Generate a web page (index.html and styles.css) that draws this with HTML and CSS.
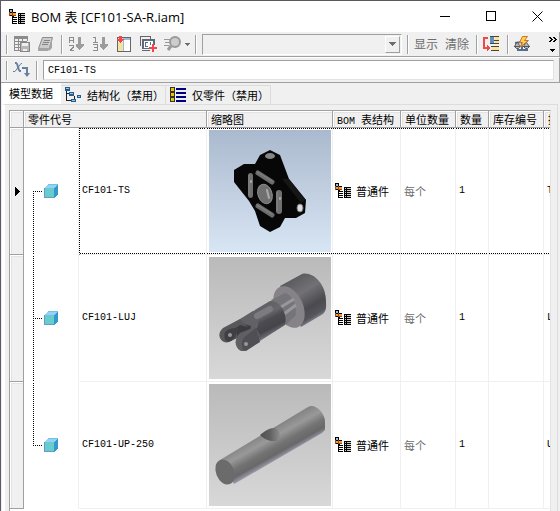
FILE: index.html
```html
<!DOCTYPE html>
<html lang="zh-CN">
<head>
<meta charset="UTF-8">
<meta name="viewport" content="width=device-width, initial-scale=1.0">
<title>BOM 表 [CF101-SA-R.iam]</title>
<link rel="stylesheet" href="styles.css">
</head>
<body>
  <!-- shared icons -->
  <svg class="defs" aria-hidden="true">
    <symbol id="icon-bom" viewBox="0 0 16 16">
      <path fill="#000" d="M0 0h4v3h3v4H5v1H4v7H3V7H0z"/>
      <path fill="#8cc8f0" d="M1 1h2v2H1z"/>
      <path fill="#f5a030" d="M1 4h2v2H1zM4 4h3v2H4z"/>
      <path fill="#a04810" d="M3 3h1v4H3zM0 3h1v4H0zM4 6h3v1H4z"/>
      <path fill="#000" d="M4 8h4v1H4zM4 10h4v1H4zM4 12h4v1H4zM4 14h4v1H4zM9 4h7v11H9z"/>
      <path fill="#ccc" d="M10 5h1v1h-1zM12 5h4v1h-4zM10 7h1v1h-1zM12 7h4v1h-4zM10 9h1v1h-1zM12 9h4v1h-4zM10 11h1v1h-1zM12 11h4v1h-4zM10 13h1v1h-1zM12 13h4v1h-4z"/>
    </symbol>
    <symbol id="icon-part" viewBox="0 0 14 14">
      <path fill="#66cccc" d="M0 4h10v10H0z"/>
      <path fill="#99ccff" d="M0 4l4-4h10l-4 4z"/>
      <path fill="#3399cc" d="M10 4l4-4v10l-4 4z"/>
      <path fill="none" stroke="#6699cc" d="M0.500 4v9.500h10"/>
      <path fill="none" stroke="#66cccc" d="M4 0.500h9.500"/>
    </symbol>
    <symbol id="icon-down" viewBox="0 0 7 4">
      <path d="M0 0h7v1H6v1H5v1H4v1H3V3H2V2H1V1H0z"/>
    </symbol>
    <linearGradient id="sky" x1="0" y1="0" x2="0" y2="1">
      <stop offset="0" stop-color="#abb9ce"/><stop offset="1" stop-color="#d8e5f4"/>
    </linearGradient>
    <linearGradient id="grey" x1="0" y1="0" x2="0" y2="1">
      <stop offset="0" stop-color="#bababa"/><stop offset="1" stop-color="#d8d8d8"/>
    </linearGradient>
  </svg>

  <header class="title-bar">
    <svg class="icon" width="16" height="16"><use href="#icon-bom"/></svg>
    <h1>BOM 表 [CF101-SA-R.iam]</h1>
    <div class="window-buttons">
      <button aria-label="最小化"><svg width="11" height="11"><path d="M0 5.500h10" stroke="#000"/></svg></button>
      <button aria-label="最大化"><svg width="11" height="11"><path d="M0.500 0.500h9v9h-9z" fill="none" stroke="#000"/></svg></button>
      <button aria-label="关闭"><svg class="smooth" width="11" height="11"><path d="M0.500 0.500l10 10M10.500 0.500l-10 10" stroke="#000"/></svg></button>
    </div>
  </header>

  <div class="toolbar">
    <span class="grip"></span>
    <button disabled aria-label="保存">
      <svg width="18" height="16">
        <path fill="#8c8c8c" d="M1 0h14v5h-1V3H2v11h6v1H1z"/>
        <path fill="#8c8c8c" d="M2 5h12v1H2zM2 8h6v1H2zM2 11h6v1H2zM5 3h1v11H5zM9 3h1v3H9z"/>
        <path fill="#b8b8b8" d="M8 6h8v10H8z"/>
        <path fill="none" stroke="#858585" d="M7.500 6.500h9v9h-9z"/>
        <path fill="#eee" d="M9 7h6v3H9zM10 13h4v2h-4z"/>
      </svg>
    </button>
    <button disabled aria-label="导出">
      <svg class="smooth" width="16" height="16">
        <path fill="#ccc" stroke="#8c8c8c" d="M5.500 1.500h10l-3 11H1.500z"/>
        <path fill="#a4a4a4" d="M1 12h12l-2 3H1zM12 12l3-10v10l-3 3z"/>
        <path stroke="#858585" d="M7 4.500h6M6 6.500h6M5 8.500h6"/>
      </svg>
    </button>
    <span class="separator"></span>
    <button disabled aria-label="排序">
      <svg width="16" height="16">
        <path fill="none" stroke="#8c8c8c" d="M1.500 7V1.500h4V7M2 4.500h4M1 9.500h4.500v2h-1v1h-1v1h-1v1H6"/>
        <path fill="#9c9c9c" d="M10 1h3v7h3v2h-1v1h-1v1h-1v1h-1v1h-1v-1h-1v-1H9v-1H8V8h2z"/>
      </svg>
    </button>
    <button disabled aria-label="重新编号">
      <svg width="16" height="16">
        <path fill="none" stroke="#8c8c8c" d="M1 1.500h2.500V6M1 6.500h5M1 8.500h4.500v2.500H2M5.500 11v3.500H1"/>
        <path fill="#9c9c9c" d="M10 1h3v7h3v2h-1v1h-1v1h-1v1h-1v1h-1v-1h-1v-1H9v-1H8V8h2z"/>
      </svg>
    </button>
    <button aria-label="添加列">
      <svg width="16" height="16">
        <path fill="#fff" stroke="#666" d="M1.500 1.500h13v14h-13z"/>
        <path fill="#f5e3a0" d="M2 6h5v9H2zM2 2h5v2H2z"/>
        <path fill="#99bbdd" d="M7 2h7v2H7zM7 4h1v11H7z"/>
        <path fill="#f04848" d="M3 0h3v3h2v1H7v1H6v1H5v1H4V6H3V5H2V4H1V3h2z"/>
      </svg>
    </button>
    <button aria-label="添加自定义特性">
      <svg width="17" height="16">
        <path fill="none" stroke="#666" d="M0.500 10V0.500h10v2M2.500 12.500v-9h12v5M2 14.500h8"/>
        <path fill="#fff" stroke="#536f8b" d="M3.500 4.500h10v8h-10zM5.500 6.500v4M5 6.500h3M5 10.500h3M10.500 6v3"/>
        <path fill="#f04848" d="M12 8h2v3h3v2h-3v3h-2v-3H9v-2h3z"/>
      </svg>
    </button>
    <button class="with-menu" disabled aria-label="查找">
      <svg class="smooth" width="18" height="16">
        <circle cx="11" cy="6" r="5" fill="#ccc" stroke="#999" stroke-width="2"/>
        <path fill="none" stroke="#999" d="M7 10l-3 4" stroke-width="3"/>
        <path stroke="#999" d="M0 3.500h6M1 6.500h5M0 9.500h5"/>
      </svg>
      <svg class="arrow" width="5" height="3"><path d="M0 0h5v1H4v1H3v1H2V2H1V1H0z"/></svg>
    </button>
    <span class="separator"></span>
    <div class="combo">
      <select aria-label="样式" disabled><option></option></select>
      <span class="combo-arrow"><svg width="7" height="4"><use href="#icon-down"/></svg></span>
    </div>
    <span class="separator"></span>
    <button class="text-button" disabled>显示</button>
    <button class="text-button" disabled>清除</button>
    <span class="separator"></span>
    <button aria-label="零件合并设置">
      <svg width="16" height="16">
        <path fill="none" stroke="#f04848" stroke-width="2" d="M5 2H1v10h4"/>
        <path fill="#f04848" d="M4 9h1v1h1v1h1v2H6v1H5v1H4z"/>
        <path fill="#444" d="M7 0h9v1H7zM7 4h9v1H7zM7 7h9v1H7zM8 10h8v1H8zM8 14h8v1H8z"/>
        <path fill="#6290b8" d="M7 1h4v6H7z"/>
        <path fill="#ffe18c" d="M12 1h4v3h-4zM12 5h4v2h-4zM9 11h7v3H9z"/>
      </svg>
    </button>
    <span class="separator"></span>
    <button aria-label="更新质量特性">
      <svg class="smooth" width="17" height="16">
        <path fill="none" stroke="#536f8b" stroke-width="2" d="M1 7l13-2M8 6v7M3 14h11"/>
        <path fill="#b0bac4" stroke="#555" d="M3 6l-2.500 4.500h6zM0.500 10.500h6l-2 2h-2zM12 6l-2.500 4.500h6zM9.500 10.500h6l-2 2h-2z"/>
        <path fill="#ffd54a" stroke="#d07030" d="M8.500 0.500h5l-3 4h4l-9 7 3-5h-3z"/>
      </svg>
    </button>
    <button class="overflow-button" aria-label="更多">
      <svg width="8" height="16">
        <path fill="none" stroke="#000" stroke-width="1" d="M0.500 1l2.500 2.500L0.500 6M4.500 1l2.500 2.500L4.500 6"/>
        <path d="M1 13h5v1H5v1H4v1H3v-1H2v-1H1z"/>
      </svg>
    </button>
  </div>

  <div class="formula-bar">
    <span class="grip"></span>
    <button aria-label="表达式">
      <svg class="smooth" width="18" height="16">
        <path fill="none" stroke="#6580a0" stroke-width="2" d="M2 1h1c2 0 2 8 4 8h1"/>
        <path fill="none" stroke="#6580a0" d="M9 1.500H8L2 9.500H0"/>
        <path fill="none" stroke="#6580a0" stroke-width="2" d="M9 6h5v6"/>
        <path fill="#6580a0" d="M11 11h6l-3 4z"/>
      </svg>
    </button>
    <span class="separator"></span>
    <input type="text" class="latin" aria-label="单元格内容" value="CF101-TS">
  </div>

  <nav class="tabs" role="tablist">
    <button class="tab active" role="tab" aria-selected="true">模型数据</button>
    <button class="tab" role="tab">
      <svg width="16" height="16">
        <path fill="none" stroke="#222" d="M1.500 3v10.500H6M2 6.500h3M9.500 9v4.500"/>
        <path fill="#285a8c" d="M0 0h5v4H0zM4 5h5v4H4zM6 12h5v3H6zM12 8h4v3h-4z"/>
        <path fill="#8cc8f0" d="M1 1h3v1H1zM5 6h3v1H5zM7 13h3v1H7zM13 9h2v1h-2z"/>
      </svg>
      结构化（禁用）
    </button>
    <button class="tab" role="tab">
      <svg width="16" height="16">
        <path fill="#333" d="M0 0h5v15H0z"/>
        <path fill="#e8c800" d="M1 1h3v3H1zM1 6h3v3H1zM1 11h3v3H1z"/>
        <path fill="#000080" d="M6 1h10v2H6zM6 5h10v2H6zM6 9h10v2H6zM6 13h10v2H6z"/>
      </svg>
      仅零件（禁用）
    </button>
  </nav>

  <main class="panel">
    <div class="grid">
      <table>
        <colgroup>
          <col class="col-marker"><col class="col-tree"><col class="col-number"><col class="col-thumb"><col class="col-structure"><col class="col-unit"><col class="col-qty"><col class="col-stock"><col>
        </colgroup>
        <thead>
          <tr>
            <th></th>
            <th colspan="2">零件代号</th>
            <th>缩略图</th>
            <th><span class="latin">BOM </span>表结构</th>
            <th>单位数量</th>
            <th>数量</th>
            <th>库存编号</th>
            <th>描述</th>
          </tr>
        </thead>
        <tbody>
          <tr class="selected">
            <th scope="row" class="marker"><svg width="5" height="9"><path d="M0 0h1v1h1v1h1v1h1v1h1v1H4v1H3v1H2v1H1v1H0z"/></svg></th>
            <td class="tree">
              <svg width="54" height="126">
                <path class="branch" d="M9.500 63V127M9 63.500h9"/>
                <use href="#icon-part" x="20" y="56" width="14" height="14"/>
              </svg>
            </td>
            <td class="latin number">CF101-TS</td>
            <td class="thumb">
              <svg class="smooth" width="122" height="122">
                <rect width="122" height="122" fill="url(#sky)"/>
                <path fill="#070707" d="M61 20l10 5 9 24 17 21-1 13-9 5H76l-5 9-10 5-10-6-5-15-6-10-15-19V40l10-6h11l5-9z"/>
                <path fill="#161616" d="M73 49l7 0 17 21-5 3z"/>
                <g fill="#707070">
                  <ellipse cx="61" cy="26" rx="5" ry="3" fill="#858585"/>
                  <rect x="39" y="43" width="5" height="25" rx="3"/>
                  <rect x="67" y="60" width="6" height="24" rx="3"/>
                  <ellipse cx="56" cy="64" rx="7" ry="10" transform="rotate(-20 56 64)" stroke="#8c8c8c"/>
                </g>
                <path stroke="#6c6c6c" stroke-width="5" stroke-linecap="round" d="M49 43l14 9M49 76l14 9"/>
                <path stroke="#858585" stroke-linecap="round" d="M48 42l15 9M48 75l15 9M40 45v20M68 62v19"/>
                <path stroke="#aaa" stroke-width="2" stroke-linecap="round" d="M58 60l2 8M42 51v1M71 68v1"/>
                <ellipse cx="91" cy="78" rx="3" ry="4" fill="#ddd" stroke="#777"/>
              </svg>
            </td>
            <td class="structure"><div><svg width="16" height="16"><use href="#icon-bom"/></svg>普通件</div></td>
            <td class="unit">每个</td>
            <td class="latin">1</td>
            <td></td>
            <td class="latin">T</td>
          </tr>
          <tr>
            <th scope="row" class="marker"></th>
            <td class="tree">
              <svg width="54" height="126">
                <path class="branch" d="M9.500 -1V127M9 63.500h9"/>
                <use href="#icon-part" x="20" y="56" width="14" height="14"/>
              </svg>
            </td>
            <td class="latin number">CF101-LUJ</td>
            <td class="thumb">
              <svg class="smooth" width="122" height="122">
                <defs>
                  <linearGradient id="head" gradientUnits="userSpaceOnUse" x1="82" y1="23" x2="106" y2="63">
                    <stop offset="0" stop-color="#5c5c60"/><stop offset="0.350" stop-color="#727276"/><stop offset="0.500" stop-color="#606065"/><stop offset="0.700" stop-color="#4a4a4f"/><stop offset="0.900" stop-color="#55555b"/><stop offset="1" stop-color="#83838e"/>
                  </linearGradient>
                  <linearGradient id="shaft" gradientUnits="userSpaceOnUse" x1="46" y1="53" x2="59" y2="79">
                    <stop offset="0" stop-color="#606065"/><stop offset="0.300" stop-color="#68686c"/><stop offset="0.500" stop-color="#4c4c50"/><stop offset="0.800" stop-color="#444449"/><stop offset="1" stop-color="#6e6e78"/>
                  </linearGradient>
                </defs>
                <rect width="122" height="122" fill="url(#grey)"/>
                <path fill="url(#head)" d="M71 29l22-12c10-3 24 9 24 27 0 5 1 9-3 13L92 70z"/>
                <ellipse cx="80" cy="50" rx="14" ry="22" transform="rotate(-25 80 50)" fill="#858388"/>
                <path fill="#757478" d="M62 43l14-7c7 2 11 10 11 22l-10 10z"/>
                <path stroke="#98979c" stroke-width="3" d="M72 50l13-8M75 57l12-9"/>
                <path fill="url(#shaft)" d="M31 62l30-18c10-1 18 13 15 24L40 91l-12-7z"/>
                <path fill="#626266" d="M27 65l17-11c5 4 7 12 4 17l-8 3-6-7z"/>
                <path fill="#3c3c40" d="M20 74l12-8 10 3-1 5-13 7-6 3z"/>
                <path fill="#58585c" d="M31 62l-17 9c-5 4-5 11 1 14 3 1 6 0 8-2l5-3v-5l-5 3-1-4 9-6 8 2z"/>
                <path fill="#404044" d="M16 75c4-4 9-4 14-4l-4 9-4 4c-5 3-8-3-6-9z"/>
                <path fill="#606064" d="M46 70l-15 6c-6 5-6 15 1 18h4l6-4 9-12z"/>
                <path fill="#505054" d="M47 71l-9 7c-6 4-6 9-4 15l3 1 14-9z"/>
                <circle cx="21" cy="78" r="2" fill="#98989c"/>
                <circle cx="37" cy="87" r="2" fill="#98989c"/>
                <path stroke="#7c7c80" stroke-width="6" stroke-linecap="round" d="M48 59l13-7"/>
              </svg>
            </td>
            <td class="structure"><div><svg width="16" height="16"><use href="#icon-bom"/></svg>普通件</div></td>
            <td class="unit">每个</td>
            <td class="latin">1</td>
            <td></td>
            <td class="latin">L</td>
          </tr>
          <tr>
            <th scope="row" class="marker"></th>
            <td class="tree">
              <svg width="54" height="126">
                <path class="branch" d="M9.500 -1V63M9 63.500h9"/>
                <use href="#icon-part" x="20" y="56" width="14" height="14"/>
              </svg>
            </td>
            <td class="latin number">CF101-UP-250</td>
            <td class="thumb">
              <svg class="smooth" width="122" height="122">
                <defs>
                  <linearGradient id="rod" gradientUnits="userSpaceOnUse" x1="55" y1="49" x2="69" y2="74">
                    <stop offset="0" stop-color="#858585"/><stop offset="0.300" stop-color="#999"/><stop offset="0.600" stop-color="#737373"/><stop offset="0.850" stop-color="#68686a"/><stop offset="1" stop-color="#9292a0"/>
                  </linearGradient>
                  <linearGradient id="hole" x1="0" y1="0" x2="1" y2="0">
                    <stop offset="0" stop-color="#505050"/><stop offset="0.500" stop-color="#606060"/><stop offset="1" stop-color="#8c8c8c"/>
                  </linearGradient>
                </defs>
                <rect width="122" height="122" fill="url(#grey)"/>
                <path fill="url(#rod)" d="M11 76l88-53c7-4 17 6 17 15v8l-3 3-88 51z"/>
                <ellipse cx="16" cy="88" rx="9" ry="13" transform="rotate(-22 16 88)" fill="#6b6b6b"/>
                <path fill="url(#hole)" d="M51 51c5-4 9-7 14-7 5 1 7 6 5 10-1 4-4 3-8 3-5-1-9-4-11-6z"/>
              </svg>
            </td>
            <td class="structure"><div><svg width="16" height="16"><use href="#icon-bom"/></svg>普通件</div></td>
            <td class="unit">每个</td>
            <td class="latin">1</td>
            <td></td>
            <td class="latin">U</td>
          </tr>
        </tbody>
      </table>
    </div>
  </main>
</body>
</html>
```

FILE: styles.css
```css
* {
  box-sizing: border-box;
}

body {
  margin: 0;
  height: 100vh;
  overflow: hidden;
  display: flex;
  flex-direction: column;
  border-top: 1px solid #5a5a5e;
  border-left: 1px solid #5a5a66;
  background: #f0f0f0;
  color: #000;
  font-family: "Noto Sans CJK SC", sans-serif;
  font-size: 11px;
  line-height: 14px;
}

svg {
  display: block;
  flex: none;
  shape-rendering: crispEdges;
}

svg.smooth {
  shape-rendering: auto;
}

.defs {
  position: absolute;
  width: 0;
  height: 0;
}

button {
  display: flex;
  align-items: center;
  flex: none;
  margin: 0;
  padding: 0;
  border: 0;
  background: transparent;
  color: inherit;
  font: inherit;
}

.latin {
  font-family: "Liberation Mono", "Noto Sans CJK SC", monospace;
  font-size: 10px;
}

span.latin {
  line-height: 10px;
}

/* title bar */
.title-bar {
  display: flex;
  align-items: center;
  flex: none;
  height: 31px;
  padding-left: 8px;
  background: #fff;
}

.title-bar h1 {
  flex: 1;
  margin: 0 0 0 6px;
  font-family: "Open Sans", "Noto Sans CJK SC", sans-serif;
  font-size: 13px;
  font-weight: 400;
  line-height: 18px;
  white-space: nowrap;
}

.window-buttons {
  display: flex;
}

.window-buttons button {
  justify-content: center;
  width: 46px;
  height: 30px;
}

/* toolbars */
.toolbar,
.formula-bar {
  display: flex;
  align-items: center;
  flex: none;
  gap: 5px;
  padding-left: 5px;
  border-right: 1px solid #a0a0a0;
  border-bottom: 1px solid #a0a0a0;
}

.toolbar {
  height: 25px;
}

.grip,
.separator {
  flex: none;
  width: 2px;
  height: 19px;
  border-left: 1px solid #a0a0a0;
  border-right: 1px solid #fff;
}

.toolbar button {
  min-width: 19px;
}

.toolbar .with-menu {
  gap: 3px;
}

.arrow {
  fill: #6d6d6d;
}

.toolbar .text-button {
  margin-right: 2px;
  color: #6d6d6d;
  font-size: 12px;
  line-height: 18px;
}

.combo {
  position: relative;
  flex: 1;
}

.combo select {
  display: block;
  width: 100%;
  height: 21px;
  appearance: none;
  border: 1px solid #a0a0a0;
  border-right-color: #fff;
  border-bottom-color: #fff;
  border-radius: 0;
  background: #f0f0f0;
  opacity: 1;
}

.combo-arrow {
  position: absolute;
  top: 2px;
  right: 2px;
  display: flex;
  align-items: center;
  justify-content: center;
  width: 15px;
  height: 17px;
  border: 1px solid #fff;
  border-right-color: #a0a0a0;
  border-bottom-color: #a0a0a0;
  fill: #6d6d6d;
  pointer-events: none;
}

.toolbar .overflow-button {
  justify-content: flex-end;
  margin-right: 2px;
}

.formula-bar {
  height: 26px;
  border-top: 1px solid #fff;
}

.formula-bar input {
  flex: 1;
  min-width: 0;
  height: 20px;
  padding: 0 4px;
  margin-right: 5px;
  border: 1px solid #a0a0a0;
  border-right-color: #e3e3e3;
  border-bottom-color: #e3e3e3;
  background: #fff;
}

/* tabs */
.tabs {
  display: flex;
  align-items: flex-end;
  flex: none;
  height: 21px;
  padding-left: 1px;
}

.tab {
  gap: 6px;
  height: 19px;
  padding: 0 1px 0 4px;
  border-top: 1px solid #dcdcdc;
  border-right: 1px solid #dcdcdc;
  white-space: nowrap;
}

.tab.active {
  height: 21px;
  padding: 0 7px 2px;
  border-color: #fff;
  background: #fff;
}

/* table */
.panel {
  flex: 1;
  min-height: 0;
  margin: 0 2px 0 1px;
  padding: 5px 6px 0 4px;
  border-top: 1px solid #dcdcdc;
  border-left: 3px solid #fff;
  border-right: 1px solid #dcdcdc;
}

.grid {
  height: 100%;
  overflow: hidden;
  border: 1px solid #a0a0a0;
  border-right-color: #e3e3e3;
  border-bottom: 0;
  background: #fff;
}

table {
  width: 100%;
  table-layout: fixed;
  border-collapse: separate;
  border-spacing: 0;
}

.col-marker { width: 14px; }
.col-tree { width: 55px; }
.col-number { width: 128px; }
.col-thumb { width: 126px; }
.col-structure { width: 68px; }
.col-unit { width: 55px; }
.col-qty { width: 33px; }
.col-stock { width: 55px; }

th,
td {
  overflow: hidden;
  padding: 0 3px;
  border-right: 1px solid #f0f0f0;
  border-bottom: 1px solid #f0f0f0;
  font-weight: 400;
  text-align: left;
  text-overflow: clip;
  white-space: nowrap;
}

th {
  border-color: #a0a0a0;
  background: #f0f0f0;
  box-shadow: inset 1px 1px #fff, inset 2px 2px #e3e3e3;
}

th:last-child,
td:last-child {
  border-right: 0;
  padding-right: 0;
}

thead th {
  height: 17px;
  padding: 0 4px;
}

tbody tr {
  height: 127px;
}

tbody .marker {
  padding: 0 5px;
}

.tree {
  padding: 0;
  border-bottom-color: #fff;
}

.branch {
  fill: none;
  stroke: #000;
  stroke-dasharray: 1 1;
}

td.thumb,
td.structure {
  padding: 0 2px;
}

.structure div {
  display: flex;
  align-items: center;
  gap: 5px;
}

.unit {
  color: #6d6d6d;
}

/* dotted focus frame round the current row */
.selected td:not(.tree) {
  background-image:
    repeating-linear-gradient(to right, #000 0 1px, transparent 1px 2px),
    repeating-linear-gradient(to right, #000 0 1px, transparent 1px 2px);
  background-position: left top, left bottom;
  background-repeat: no-repeat;
  background-size: 100% 1px;
  background-origin: padding-box;
}

.selected td.number {
  border-left: 1px dotted #000;
  padding-left: 2px;
}
```
